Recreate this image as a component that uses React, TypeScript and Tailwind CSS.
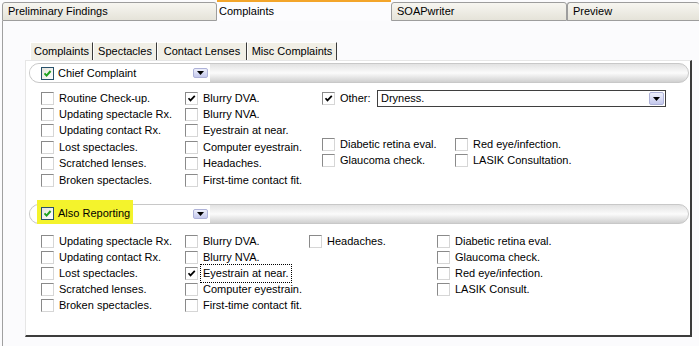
import React from 'react';

const font = "font-['Liberation_Sans',Arial,sans-serif]";

const Box = ({ on, green }: { on?: boolean; green?: boolean }) => {
    if (green) {
        return (
            <span className="w-[13px] h-[13px] shrink-0 border border-[#27506a] bg-linear-to-br from-[#e4e4dc] to-white flex items-center justify-center">
                <svg width="9" height="9" viewBox="0 0 9 9">
                    <path d="M1.5 4.3 L3.6 6.6 L7.6 2" stroke="#1fa21f" strokeWidth="2" fill="none" />
                </svg>
            </span>
        );
    }
    return (
        <span className="w-[13px] h-[13px] shrink-0 border border-t-[#8a8a8a] border-l-[#8a8a8a] border-r-[#d6d6d6] border-b-[#d6d6d6] bg-white flex items-center justify-center">
            {on && (
                <svg width="9" height="9" viewBox="0 0 9 9">
                    <path d="M1.5 4.2 L3.5 6.4 L7.8 1.8" stroke="#000" strokeWidth="1.7" fill="none" />
                </svg>
            )}
        </span>
    );
};

const DropBtn = ({ tall }: { tall?: boolean }) => (
    <span
        className={
            tall
                ? 'w-[15px] h-[13px] rounded-[2px] border border-[#aeb2d8] bg-linear-to-b from-[#eef0fb] to-[#c4c8ec] flex items-center justify-center'
                : 'w-[15px] h-[10px] rounded-[2px] border border-[#aeb2d8] bg-linear-to-b from-[#eef0fb] to-[#c4c8ec] flex items-center justify-center'
        }
    >
        <svg width="7" height="4" viewBox="0 0 7 4">
            <path d="M0 0 H7 L3.5 4 Z" fill="#000" />
        </svg>
    </span>
);

const Item = ({ label, on, focus, h }: { label: string; on?: boolean; focus?: boolean; h: string }) => (
    <div className={`flex items-center ${h}`}>
        <Box on={on} />
        <span
            className={
                focus
                    ? 'ml-[5px] leading-[13px] whitespace-nowrap outline-1 outline-dotted outline-black outline-offset-2'
                    : 'ml-[5px] leading-[13px] whitespace-nowrap'
            }
        >
            {label}
        </span>
    </div>
);

const Bar = ({ label, highlight }: { label: string; highlight?: boolean }) => (
    <div className="relative">
        {highlight && <div className="absolute left-[8px] top-[-4px] w-[96px] h-[24px] bg-[#f4f32c] z-[1]" />}
        <div className="h-[20px] rounded-[10px] border border-[#c8c8c8] bg-linear-to-b from-[#e2e2e2] via-[#fbfbfb] to-[#d0d0d0] overflow-hidden flex">
            <div className="w-[180px] h-full bg-white flex items-center pl-[11px] pr-[2px]">
                <span className="relative z-[2] flex items-center">
                    <Box green />
                    <span className="ml-[4px] leading-[13px] whitespace-nowrap">{label}</span>
                </span>
                <span className="ml-auto">
                    <DropBtn />
                </span>
            </div>
        </div>
    </div>
);

const TopTab = ({ label, w, last }: { label: string; w: string; last?: boolean }) => (
    <div
        className={`${w} h-[19px] border border-[#9d9d9d] ${last ? 'border-r-0 flex-1' : ''} rounded-t-[3px] bg-linear-to-b from-[#f7f6f1] to-[#e5e3d9] flex items-center pl-[5px]`}
    >
        {label}
    </div>
);

const InnerTab = ({ label, w }: { label: string; w: string }) => (
    <div className={`${w} h-[18px] bg-[#f1efe6] border-l border-l-white border-t border-t-white border-r border-r-[#3a3a3a] flex items-center justify-center`}>
        {label}
    </div>
);

const App = () => {
    const r1 = 'h-[16.4px]';
    const r2 = 'h-[15.8px]';

    return (
        <div className={`w-[699px] h-[346px] overflow-hidden bg-[#fbfbfd] text-[11px] text-black ${font}`}>
            {/* top tabs */}
            <div className="flex items-end h-[21px] pl-[2px]">
                <TopTab label="Preliminary Findings" w="w-[215px]" />
                <div className="w-[174px] h-[21px] border-t-2 border-t-[#f3a52a] bg-[#fcfcfe] pl-[2px] pt-[1px]">
                    Complaints
                </div>
                <TopTab label="SOAPwriter" w="w-[176px]" />
                <TopTab label="Preview" w="w-[132px]" last />
            </div>

            <div className="ml-[2px] h-[325px] border-l border-[#a0a0a0] pl-[22px] pt-[21px]">
                {/* inner tabs */}
                <div className="flex ml-[5px]">
                    <InnerTab label="Complaints" w="w-[63px]" />
                    <InnerTab label="Spectacles" w="w-[64px]" />
                    <InnerTab label="Contact Lenses" w="w-[90px]" />
                    <InnerTab label="Misc Complaints" w="w-[90px]" />
                </div>

                {/* panel */}
                <div className="w-[667px] h-[277px] bg-white border-l border-t border-[#e6e6e6] border-r-2 border-r-[#3c3c3c] border-b-2 border-b-[#3c3c3c] pl-[3px] pr-[1px] pt-[2px]">
                    <Bar label="Chief Complaint" />

                    <div className="flex mt-[7px] pl-[12px] h-[98.4px]">
                        <div className="w-[144px]">
                            <Item h={r1} label="Routine Check-up." />
                            <Item h={r1} label="Updating spectacle Rx." />
                            <Item h={r1} label="Updating contact Rx." />
                            <Item h={r1} label="Lost spectacles." />
                            <Item h={r1} label="Scratched lenses." />
                            <Item h={r1} label="Broken spectacles." />
                        </div>
                        <div className="w-[137px]">
                            <Item h={r1} label="Blurry DVA." on />
                            <Item h={r1} label="Blurry NVA." />
                            <Item h={r1} label="Eyestrain at near." />
                            <Item h={r1} label="Computer eyestrain." />
                            <Item h={r1} label="Headaches." />
                            <Item h={r1} label="First-time contact fit." />
                        </div>
                        <div className="flex-1">
                            <div className={`flex items-center ${r1}`}>
                                <Box on />
                                <span className="ml-[5px] w-[37px] leading-[13px]">Other:</span>
                                <div className="w-[289px] h-[17px] mt-[1px] border border-[#3f3f3f] bg-white flex items-center pl-[3px] pr-[1px]">
                                    <span className="flex-1 leading-[13px]">Dryness.</span>
                                    <DropBtn tall />
                                </div>
                            </div>
                            <div className="flex mt-[29.8px]">
                                <div className="w-[133px]">
                                    <Item h={r1} label="Diabetic retina eval." />
                                    <Item h={r1} label="Glaucoma check." />
                                </div>
                                <div>
                                    <Item h={r1} label="Red eye/infection." />
                                    <Item h={r1} label="LASIK Consultation." />
                                </div>
                            </div>
                        </div>
                    </div>

                    <div className="mt-[15.6px]">
                        <Bar label="Also Reporting" highlight />
                    </div>

                    <div className="flex mt-[10px] pl-[12px]">
                        <div className="w-[144px]">
                            <Item h={r2} label="Updating spectacle Rx." />
                            <Item h={r2} label="Updating contact Rx." />
                            <Item h={r2} label="Lost spectacles." />
                            <Item h={r2} label="Scratched lenses." />
                            <Item h={r2} label="Broken spectacles." />
                        </div>
                        <div className="w-[124px]">
                            <Item h={r2} label="Blurry DVA." />
                            <Item h={r2} label="Blurry NVA." />
                            <Item h={r2} label="Eyestrain at near." on focus />
                            <Item h={r2} label="Computer eyestrain." />
                            <Item h={r2} label="First-time contact fit." />
                        </div>
                        <div className="w-[128px]">
                            <Item h={r2} label="Headaches." />
                        </div>
                        <div>
                            <Item h={r2} label="Diabetic retina eval." />
                            <Item h={r2} label="Glaucoma check." />
                            <Item h={r2} label="Red eye/infection." />
                            <Item h={r2} label="LASIK Consult." />
                        </div>
                    </div>
                </div>
            </div>
        </div>
    );
};

export default App;
